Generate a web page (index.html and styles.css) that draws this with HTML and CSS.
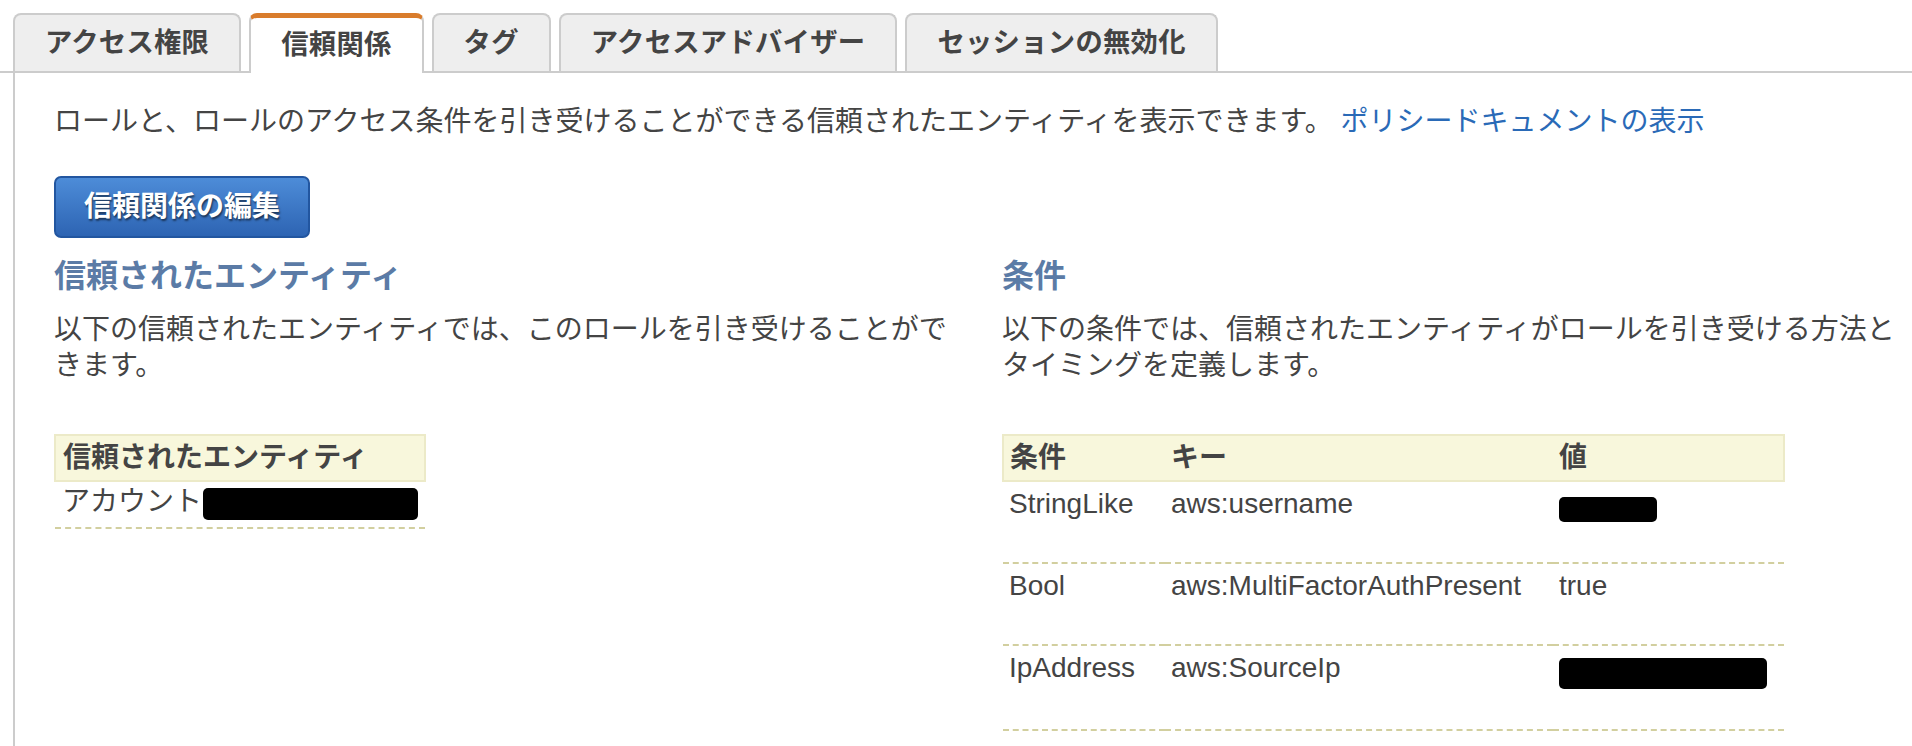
FILE: index.html
```html
<!DOCTYPE html>
<html lang="ja">
<head>
<meta charset="utf-8">
<title>信頼関係</title>
<link rel="stylesheet" href="styles.css">
</head>
<body>
<div class="tabs">
  <div class="tab">アクセス権限</div>
  <div class="tab active">信頼関係</div>
  <div class="tab">タグ</div>
  <div class="tab">アクセスアドバイザー</div>
  <div class="tab">セッションの無効化</div>
</div>
<div class="panel">
  <p class="desc">ロールと、ロールのアクセス条件を引き受けることができる信頼されたエンティティを表示できます。 <a class="link" href="#">ポリシードキュメントの表示</a></p>
  <button class="btn">信頼関係の編集</button>
  <div class="columns">
    <section class="col">
      <h2 class="heading">信頼されたエンティティ</h2>
      <p class="para">以下の信頼されたエンティティでは、このロールを引き受けることができます。</p>
      <table class="grid entities">
        <thead><tr><th>信頼されたエンティティ</th></tr></thead>
        <tbody><tr class="short"><td>アカウント<span class="redact r-acct"></span></td></tr></tbody>
      </table>
    </section>
    <section class="col">
      <h2 class="heading">条件</h2>
      <p class="para">以下の条件では、信頼されたエンティティがロールを引き受ける方法とタイミングを定義します。</p>
      <table class="grid conds">
        <colgroup><col class="c1"><col class="c2"><col class="c3"></colgroup>
        <thead><tr><th>条件</th><th>キー</th><th>値</th></tr></thead>
        <tbody>
          <tr><td>StringLike</td><td>aws:username</td><td><span class="redact r-user"></span></td></tr>
          <tr><td>Bool</td><td>aws:MultiFactorAuthPresent</td><td>true</td></tr>
          <tr><td>IpAddress</td><td>aws:SourceIp</td><td><span class="redact r-ip"></span></td></tr>
        </tbody>
      </table>
    </section>
  </div>
</div>
</body>
</html>
```

FILE: styles.css
```css
html, body {
  margin: 0;
  padding: 0;
  background: #ffffff;
}
body {
  font-family: "Liberation Sans", "Noto Sans CJK JP", sans-serif;
  font-size: 28px;
  line-height: 36px;
  color: #444444;
  overflow: hidden;
}
.tabs {
  display: flex;
  align-items: flex-end;
  gap: 8px;
  margin-top: 13px;
  padding-left: 13px;
  border-bottom: 2px solid #cccccc;
  height: 60px;
  box-sizing: border-box;
}
.tab {
  box-sizing: border-box;
  height: 58px;
  padding: 0 30px;
  border: 2px solid #cccccc;
  border-bottom: 0;
  border-radius: 8px 8px 0 0;
  background: #eeeeee;
  font-size: 27.3px;
  letter-spacing: 0.3px;
  font-weight: bold;
  line-height: 56px;
  color: #444444;
  white-space: nowrap;
}
.tab.active {
  background: #ffffff;
  border-top: 5px solid #d97c2c;
  height: 60px;
  margin-bottom: -2px;
  line-height: 53px;
}
.panel {
  border-left: 2px solid #cccccc;
  margin-left: 13px;
  padding: 31px 0 40px 39px;
}
.desc {
  margin: 0;
}
.link {
  color: #2a6ab7;
  text-decoration: none;
}
.btn {
  display: block;
  margin-top: 36px;
  height: 62px;
  width: 256px;
  padding: 0;
  border: 2px solid #2256a0;
  border-radius: 7px;
  background: linear-gradient(#4d8cd8, #2d64b3);
  color: #ffffff;
  font-family: "Liberation Sans", "Noto Sans CJK JP", sans-serif;
  font-size: 28px;
  font-weight: bold;
  line-height: 36px;
  text-shadow: 1px 2px 2px rgba(0, 0, 0, 0.55);
}
.columns {
  display: grid;
  grid-template-columns: 910px 910px;
  column-gap: 38px;
}
.heading {
  margin: 19px 0 0;
  font-size: 32px;
  line-height: 38px;
  font-weight: bold;
  color: #5b7ba6;
}
.para {
  margin: 17px 0 0;
}
.grid {
  margin-top: 50px;
  border-collapse: collapse;
  table-layout: fixed;
}
.grid th {
  background: #f8f7dc;
  border: 2px solid #eceac8;
  text-align: left;
  font-weight: bold;
  padding: 4px 6px;
}
.grid td {
  padding: 4px 6px 40px;
  border-bottom: 2px dashed #d2cf9f;
  vertical-align: top;
  white-space: nowrap;
}
.entities {
  width: 372px;
}
.entities th,
.entities td {
  padding-left: 7px;
}
.entities tr.short td {
  padding-top: 2px;
  padding-bottom: 7px;
}
.conds {
  width: 781px;
}
.conds th:first-child {
  border-right: 0;
}
.conds th:nth-child(2) {
  border-left: 0;
  border-right: 0;
}
.conds th:last-child {
  border-left: 0;
}
.c1 { width: 162px; }
.c2 { width: 388px; }
.c3 { width: 231px; }
.redact {
  display: inline-block;
  background: #000000;
  border-radius: 5px;
  vertical-align: -9px;
}
.r-acct {
  width: 215px;
  height: 32px;
  margin-left: 1px;
}
.r-user {
  width: 98px;
  height: 25px;
}
.r-ip {
  width: 208px;
  height: 31px;
  vertical-align: -12px;
}
```
